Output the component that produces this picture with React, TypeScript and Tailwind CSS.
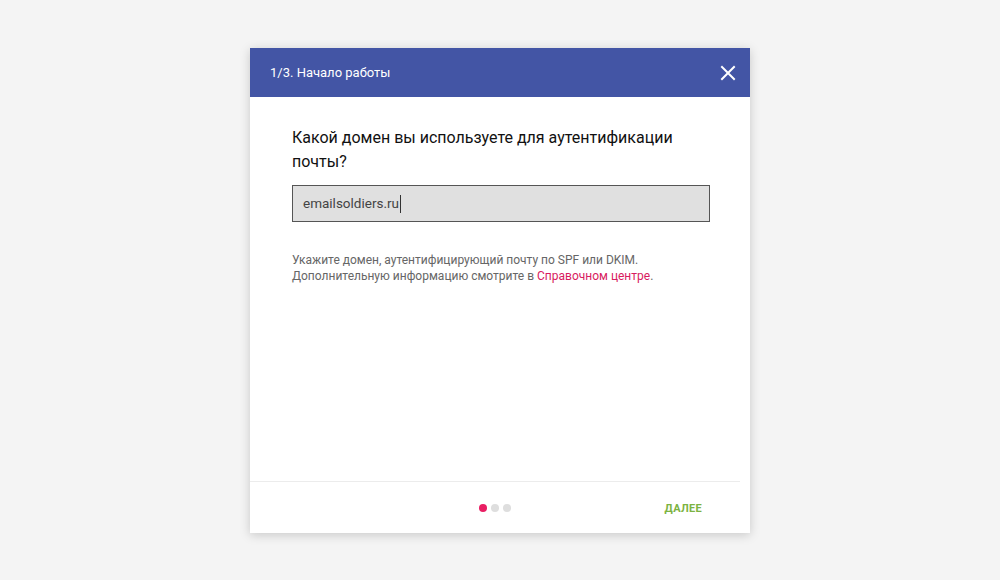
import React from "react";

export default function App() {
  return (
    <div
      className="w-[1000px] h-[580px] bg-[#f4f4f4] flex justify-center pt-[48px]"
      style={{ fontFamily: "Roboto, 'Noto Sans', sans-serif" }}
    >
      <div className="w-[500px] h-[485px] bg-white flex flex-col shadow-[0_2px_10px_rgba(0,0,0,0.18)]">
        {/* header */}
        <div className="h-[49px] bg-[#4355a5] flex items-center justify-between pl-[20px] pr-[14px]">
          <span className="text-white text-[13px]">1/3. Начало работы</span>
          <svg width="16" height="16" viewBox="0 0 16 16" className="text-white">
            <path d="M2 2L14 14M14 2L2 14" stroke="currentColor" strokeWidth="2" strokeLinecap="square" />
          </svg>
        </div>

        {/* body */}
        <div className="flex-1 pl-[42px] pr-[40px] pt-[29px]">
          <h2 className="text-[16px] leading-[24px] text-[#111] pr-[30px]">
            Какой домен вы используете для аутентификации почты?
          </h2>
          <div className="mt-[11px] h-[37px] bg-[#e0e0e0] border border-[#555] flex items-center px-[10px]">
            <span className="text-[13.5px] text-[#444]">emailsoldiers.ru</span>
            <span className="w-px h-[18px] bg-[#333] ml-px" />
          </div>
          <p className="mt-[30px] text-[12px] leading-[16px] text-[#666]">
            Укажите домен, аутентифицирующий почту по SPF или DKIM.
            <br />
            Дополнительную информацию смотрите в{" "}
            <span className="text-[#d81b60]">Справочном центре</span>.
          </p>
        </div>

        {/* footer */}
        <div className="h-px bg-[#ececec] mr-[10px]" />
        <div className="h-[51px] flex items-center relative">
          <div className="flex-1 flex justify-center gap-[4px] pr-[10px]">
            <span className="w-[8px] h-[8px] rounded-full bg-[#e91e63]" />
            <span className="w-[8px] h-[8px] rounded-full bg-[#dedede]" />
            <span className="w-[8px] h-[8px] rounded-full bg-[#dedede]" />
          </div>
          <span className="absolute right-[48px] top-[19px] text-[11px] font-bold text-[#7cb342] tracking-[0.3px]">
            ДАЛЕЕ
          </span>
        </div>
      </div>
    </div>
  );
}
